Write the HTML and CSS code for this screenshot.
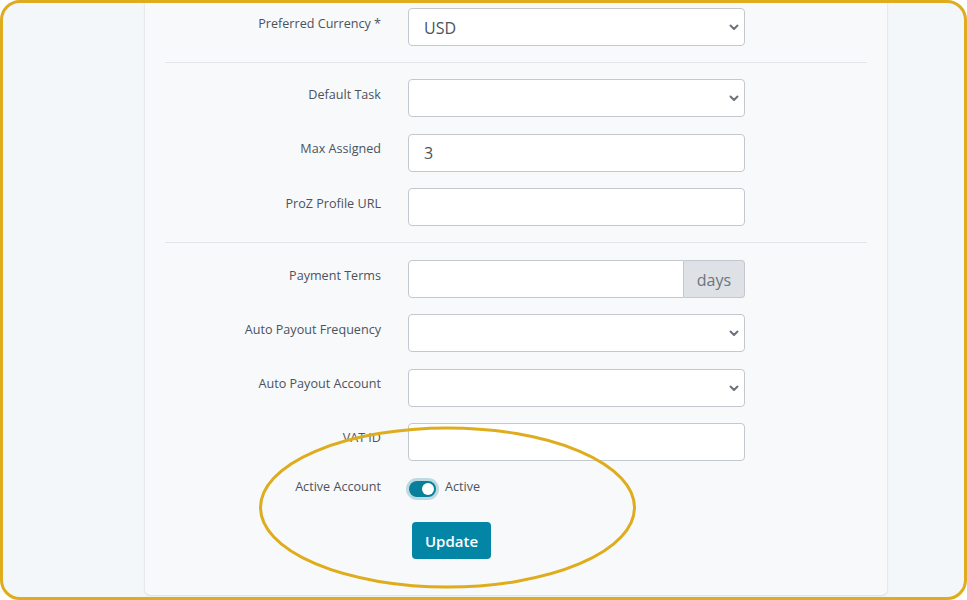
FILE: index.html
```html
<!DOCTYPE html>
<html lang="en">
<head>
<meta charset="utf-8">
<title>Vendor settings</title>
<link rel="stylesheet" href="styles.css">
</head>
<body>
<div class="frame">
  <div class="card">
    <div class="row">
      <label class="label">Preferred Currency *</label>
      <div class="field">
        <div class="control select"><span class="value">USD</span>
          <svg class="chev" width="10" height="7" viewBox="0 0 10 7"><path d="M1.5 1.5 L5 5 L8.5 1.5" fill="none" stroke="#6b737b" stroke-width="2" stroke-linecap="round" stroke-linejoin="round"/></svg>
        </div>
      </div>
    </div>
    <hr class="sep">
    <div class="row">
      <label class="label">Default Task</label>
      <div class="field">
        <div class="control select"><span class="value"></span>
          <svg class="chev" width="10" height="7" viewBox="0 0 10 7"><path d="M1.5 1.5 L5 5 L8.5 1.5" fill="none" stroke="#6b737b" stroke-width="2" stroke-linecap="round" stroke-linejoin="round"/></svg>
        </div>
      </div>
    </div>
    <div class="row">
      <label class="label">Max Assigned</label>
      <div class="field"><div class="control"><span class="value">3</span></div></div>
    </div>
    <div class="row">
      <label class="label">ProZ Profile URL</label>
      <div class="field"><div class="control"></div></div>
    </div>
    <hr class="sep sep2">
    <div class="row tight">
      <label class="label">Payment Terms</label>
      <div class="field">
        <div class="group">
          <div class="control grow"></div>
          <div class="addon">days</div>
        </div>
      </div>
    </div>
    <div class="row tight">
      <label class="label">Auto Payout Frequency</label>
      <div class="field">
        <div class="control select"><span class="value"></span>
          <svg class="chev" width="10" height="7" viewBox="0 0 10 7"><path d="M1.5 1.5 L5 5 L8.5 1.5" fill="none" stroke="#6b737b" stroke-width="2" stroke-linecap="round" stroke-linejoin="round"/></svg>
        </div>
      </div>
    </div>
    <div class="row tight">
      <label class="label">Auto Payout Account</label>
      <div class="field">
        <div class="control select"><span class="value"></span>
          <svg class="chev" width="10" height="7" viewBox="0 0 10 7"><path d="M1.5 1.5 L5 5 L8.5 1.5" fill="none" stroke="#6b737b" stroke-width="2" stroke-linecap="round" stroke-linejoin="round"/></svg>
        </div>
      </div>
    </div>
    <div class="row tight">
      <label class="label">VAT ID</label>
      <div class="field"><div class="control"></div></div>
    </div>
    <div class="row row-switch">
      <label class="label label-switch">Active Account</label>
      <div class="field switch-field">
        <span class="switch"><span class="knob"></span></span>
        <span class="switch-text">Active</span>
      </div>
    </div>
    <div class="row row-btn">
      <div class="label"></div>
      <div class="field"><button class="btn" type="button">Update</button></div>
    </div>
  </div>
  <svg class="annot" width="967" height="600" viewBox="0 0 967 600">
    <ellipse cx="447.5" cy="507.5" rx="187" ry="79.5" fill="none" stroke="#deac1c" stroke-width="3"/>
  </svg>
</div>
</body>
</html>
```

FILE: styles.css
```css
* { box-sizing: border-box; }
html, body { margin: 0; padding: 0; }
body {
  font-family: "Open Sans", "Noto Sans", sans-serif;
  background: #ffffff;
}
.frame {
  position: relative;
  width: 967px;
  height: 600px;
  border: 3px solid #deac1c;
  border-radius: 20px;
  background: #f4f7fa;
  overflow: hidden;
}
.card {
  margin-left: 142px;
  width: 742px;
  height: 592px;
  background: #f8f9fa;
  border-radius: 0 0 5px 5px;
  box-shadow: 0 0 2px rgba(0,0,0,0.14), 0 1px 3px rgba(0,0,0,0.06);
  padding: 5px 20px 0 20px;
}
.row {
  display: flex;
  align-items: flex-start;
  margin-bottom: 16.5px;
}
.row.tight { margin-bottom: 16.3px; }
.label {
  width: 216px;
  flex: none;
  text-align: right;
  font-size: 12.6px;
  line-height: 16px;
  padding-top: 7.5px;
  color: #4b535d;
}
.field {
  margin-left: 27px;
  width: 337px;
  flex: none;
}
.control {
  height: 38px;
  background: #ffffff;
  border: 1px solid #c3c8ce;
  border-radius: 4px;
  display: flex;
  align-items: center;
  padding: 0 15px;
  font-size: 16px;
  color: #4b535d;
}
.select { justify-content: space-between; padding-right: 4px; }
.value { line-height: 24px; padding-top: 1px; }
.chev { flex: none; margin-right: 1px; margin-top: 1px; }
.sep {
  border: 0;
  border-top: 1px solid #e2e5e9;
  margin: 0 0 16px 0;
  height: 0;
}
.row + .sep { margin-top: -0.5px; }
.sep2 { margin-bottom: 17px; }
.group { display: flex; }
.grow { flex: 1; border-radius: 4px 0 0 4px; }
.addon {
  width: 61px;
  height: 38px;
  background: #dee2e6;
  border: 1px solid #c3c8ce;
  border-left: 0;
  border-radius: 0 4px 4px 0;
  display: flex;
  align-items: center;
  justify-content: center;
  font-size: 16px;
  color: #6c757d;
  padding-top: 1px;
}
.row-switch { margin-top: 0; margin-bottom: 0; height: 45px; }
.label-switch { padding-top: 2px; }
.switch-field { display: flex; align-items: flex-start; margin-left: 28px; }
.switch {
  width: 27px;
  height: 16px;
  margin-top: 4px;
  border-radius: 8px;
  background: #0a7f9c;
  box-shadow: 0 0 0 3px rgba(10,127,156,0.25);
  display: flex;
  align-items: center;
  justify-content: flex-end;
  padding-right: 2px;
  flex: none;
}
.knob {
  width: 12px;
  height: 12px;
  border-radius: 50%;
  background: #ffffff;
}
.switch-text {
  margin-left: 9px;
  font-size: 12.6px;
  line-height: 16px;
  padding-top: 2px;
  color: #4b535d;
}
.row-btn { margin: 0; }
.btn {
  margin-left: 4px;
  width: 79px;
  height: 37px;
  background: #0386a6;
  color: #ffffff;
  border: 0;
  border-radius: 4px;
  font-family: "Open Sans", "Noto Sans", sans-serif;
  font-size: 15px;
  font-weight: 600;
  padding: 0;
}
.annot {
  position: absolute;
  left: -3px;
  top: -3px;
  pointer-events: none;
}
```
